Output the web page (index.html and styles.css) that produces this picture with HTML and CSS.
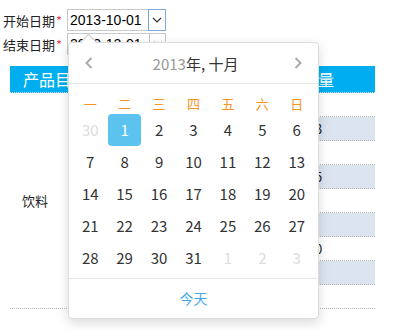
FILE: index.html
```html
<!DOCTYPE html>
<html lang="zh-CN">

<head>
  <meta charset="UTF-8">
  <meta name="viewport" content="width=device-width, initial-scale=1.0">
  <title>销售查询</title>
  <link rel="stylesheet" href="styles.css">
</head>

<body>

  <div class="filters">
    <div class="field">
      <label>开始日期<em>*</em></label>
      <div class="datebox">
        <span class="date-text">2013-10-01</span>
        <span class="date-btn is-focus">
          <svg width="10" height="6" viewBox="0 0 10 6"><polyline points="1,1 5,5 9,1" fill="none" stroke="#333" stroke-width="1.2"/></svg>
        </span>
      </div>
    </div>
    <div class="field">
      <label>结束日期<em>*</em></label>
      <div class="datebox">
        <span class="date-text">2013-12-01</span>
        <span class="date-btn">
          <svg width="10" height="6" viewBox="0 0 10 6"><polyline points="1,1 5,5 9,1" fill="none" stroke="#333" stroke-width="1.2"/></svg>
        </span>
      </div>
    </div>
  </div>

  <table class="grid">
    <thead>
      <tr>
        <th class="col-cat">产品目录</th>
        <th>产品名称</th>
        <th class="col-num">数量</th>
      </tr>
    </thead>
    <tbody>
      <tr><td class="cat" rowspan="9">饮料</td><td>可乐</td><td class="num"></td></tr>
      <tr><td>雪碧</td><td class="num">3</td></tr>
      <tr><td>芬达</td><td class="num"></td></tr>
      <tr><td>橙汁</td><td class="num">5</td></tr>
      <tr><td>绿茶</td><td class="num"></td></tr>
      <tr><td>红茶</td><td class="num"></td></tr>
      <tr><td>咖啡</td><td class="num">0</td></tr>
      <tr><td>牛奶</td><td class="num"></td></tr>
      <tr><td>矿泉水</td><td class="num"></td></tr>
    </tbody>
  </table>

  <!-- 日期选择弹层 -->
  <div class="picker">
    <span class="caret"></span>
    <div class="picker-head">
      <span class="nav">
        <svg width="8" height="12" viewBox="0 0 8 12"><polyline points="6.5,1 1.5,6 6.5,11" fill="none" stroke="#aaa" stroke-width="2"/></svg>
      </span>
      <span class="title"><span class="year">2013</span>年, 十月</span>
      <span class="nav">
        <svg width="8" height="12" viewBox="0 0 8 12"><polyline points="1.5,1 6.5,6 1.5,11" fill="none" stroke="#aaa" stroke-width="2"/></svg>
      </span>
    </div>
    <div class="week">
      <span>一</span><span>二</span><span>三</span><span>四</span><span>五</span><span>六</span><span>日</span>
    </div>
    <div class="days">
      <span class="other">30</span><span class="selected">1</span><span>2</span><span>3</span><span>4</span><span>5</span><span>6</span>
      <span>7</span><span>8</span><span>9</span><span>10</span><span>11</span><span>12</span><span>13</span>
      <span>14</span><span>15</span><span>16</span><span>17</span><span>18</span><span>19</span><span>20</span>
      <span>21</span><span>22</span><span>23</span><span>24</span><span>25</span><span>26</span><span>27</span>
      <span>28</span><span>29</span><span>30</span><span>31</span><span class="other">1</span><span class="other">2</span><span class="other">3</span>
    </div>
    <div class="picker-foot">今天</div>
  </div>

</body>

</html>
```

FILE: styles.css
```css
/* Страница отчёта */
body {
  font-family: "Noto Sans CJK SC", "Liberation Sans", sans-serif;
  margin: 0;
  padding: 0;
  background-color: #fff;
  color: #333;
}

.filters {
  padding: 8px 0 0 3px;
}

.field {
  display: flex;
  align-items: center;
  height: 24px;
}

.field label {
  font-size: 13px;
  color: #222;
  width: 64px;
}

.field label em {
  font-style: normal;
  color: #f03c5a;
  margin-left: 1px;
}

.datebox {
  display: flex;
  width: 99px;
  height: 22px;
  box-sizing: border-box;
  border: 1px solid #c8c8c8;
  background-color: #fff;
}

.date-text {
  flex: 1;
  font-family: "Liberation Sans", Arial, sans-serif;
  font-size: 14px;
  line-height: 20px;
  padding-left: 2px;
  color: #000;
}

.date-btn {
  width: 16px;
  display: flex;
  align-items: center;
  justify-content: center;
  border-left: 1px solid #c8c8c8;
  margin: -1px -1px -1px 0;
}

.date-btn.is-focus {
  border: 1px solid #7ea6e0;
}

/* Таблица */
.grid {
  margin: 10px 0 0 10px;
  width: 365px;
  border-collapse: collapse;
}

.grid th {
  height: 26px;
  padding: 0;
  background-color: #00aeef;
  color: #fff;
  font-size: 16px;
  font-weight: normal;
  border-bottom: 1px dotted #ddd;
}

.grid th.col-cat {
  width: 80px;
  text-align: left;
  padding-left: 13px;
}

.grid th.col-num {
  width: 114px;
}

.grid td {
  height: 23px;
  padding: 0;
  font-size: 13px;
  text-align: center;
  border-bottom: 1px dotted #b4b4b4;
}

.grid td.num {
  padding-left: 1px;
  color: #222;
}

.grid td.cat {
  text-align: left;
  padding-left: 12px;
  background-color: #fff;
  color: #222;
}

.grid tbody tr:nth-child(even) td {
  background-color: #dce4ef;
}

/* Календарь */
.picker {
  position: absolute;
  left: 68px;
  top: 42px;
  width: 251px;
  box-sizing: border-box;
  background-color: #fff;
  border: 1px solid #ddd;
  border-radius: 4px;
  box-shadow: 0 4px 12px rgba(0, 0, 0, 0.15);
}

.caret {
  position: absolute;
  top: -7px;
  left: 14px;
  width: 10px;
  height: 10px;
  background-color: #fff;
  border-top: 1px solid #ccc;
  border-left: 1px solid #ccc;
  transform: rotate(45deg);
}

.picker-head {
  display: flex;
  align-items: center;
  justify-content: space-between;
  height: 40px;
  padding: 0 16px;
  border-bottom: 1px solid #e6e6e6;
}

.nav {
  display: flex;
}

.title {
  font-size: 15px;
  color: #333;
  padding-left: 4px;
}

.title .year {
  color: #999;
}

.week,
.days {
  display: grid;
  grid-template-columns: repeat(7, 1fr);
  padding: 0 4px;
  text-align: center;
}

.week {
  height: 30px;
  line-height: 20px;
  padding-top: 10px;
  box-sizing: border-box;
  font-size: 13px;
  color: #f7941d;
}

.days {
  padding-bottom: 4px;
}

.days span {
  height: 32px;
  line-height: 32px;
  font-size: 15px;
  color: #333;
}

.days span.other {
  color: #ddd;
}

.days span.selected {
  margin: 0 1px;
  background-color: #5cc3ef;
  color: #fff;
  border-radius: 4px;
}

.picker-foot {
  height: 39px;
  line-height: 39px;
  text-align: center;
  font-size: 14px;
  color: #3fa9e5;
  border-top: 1px solid #e6e6e6;
}
```
